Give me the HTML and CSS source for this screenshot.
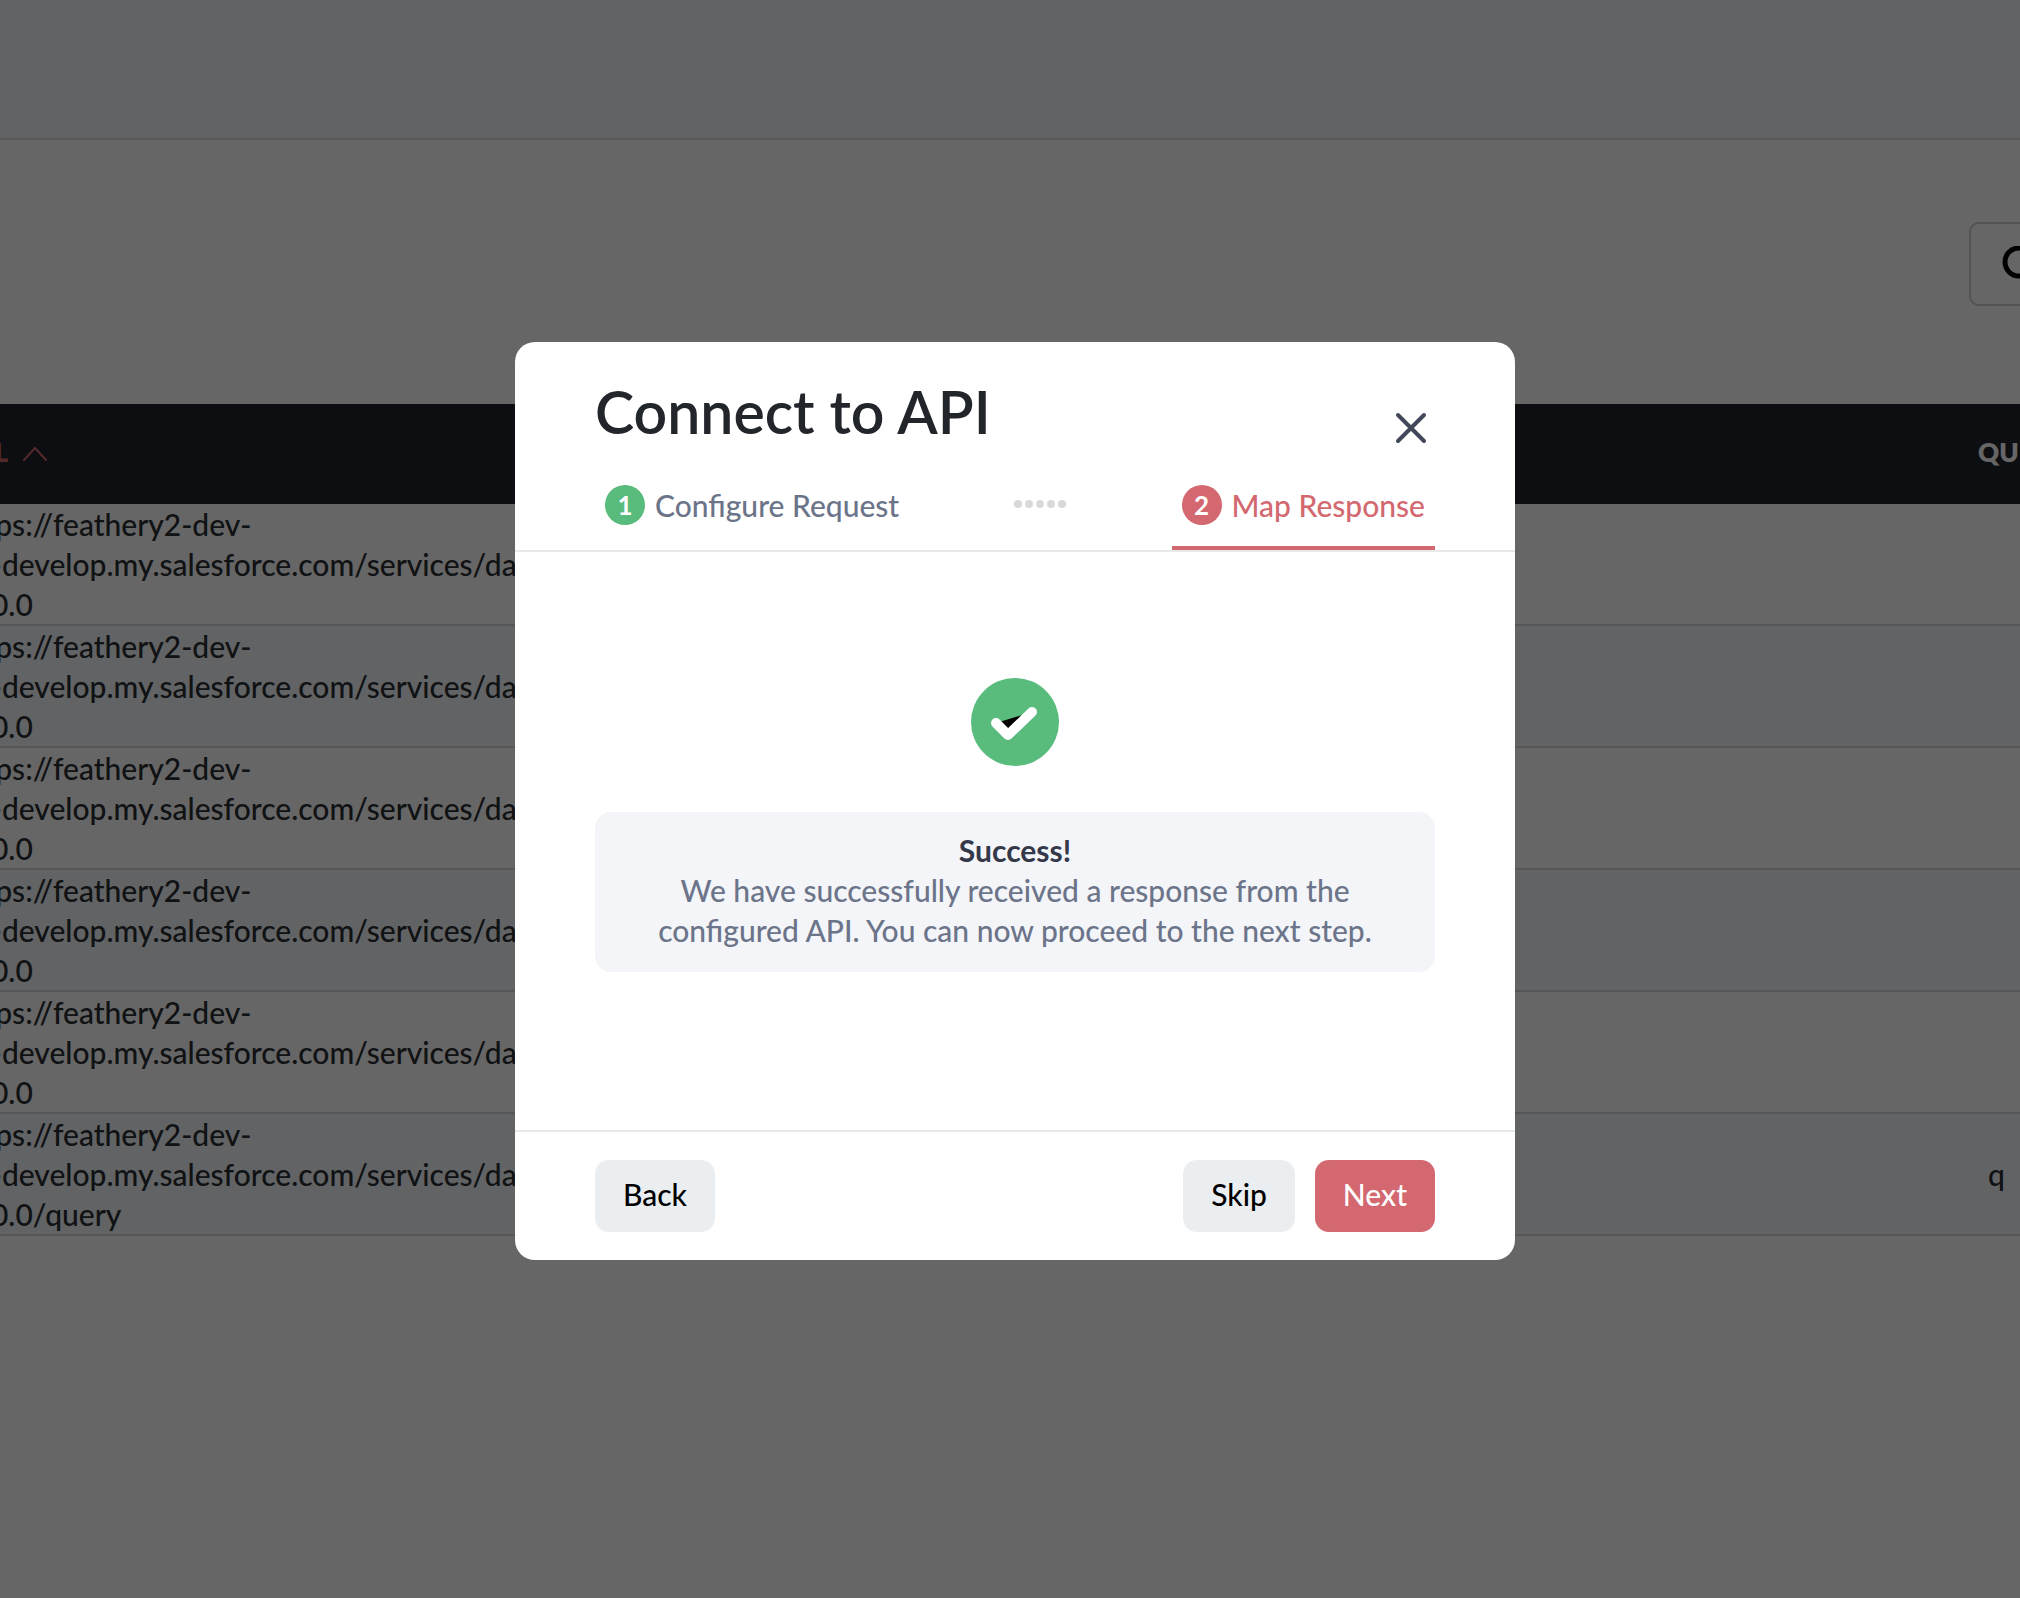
FILE: index.html
```html
<!DOCTYPE html>
<html lang="en">
<head>
    <meta charset="UTF-8">
    <meta name="viewport" content="width=device-width, initial-scale=1.0">
    <title>Connect to API</title>
    <link rel="stylesheet" href="styles.css">
</head>
<body>
    <div class="page">
        <header class="topbar"></header>
        <div class="toolbar">
            <button class="search" type="button" aria-label="Search">
                <svg width="40" height="40" viewBox="0 0 40 40" fill="none" stroke="#000" stroke-width="5" stroke-linecap="round">
                    <circle cx="18" cy="16" r="14"/>
                    <path d="M28 26l10 10"/>
                </svg>
            </button>
        </div>
        <table class="requests">
            <thead>
                <tr>
                    <th class="sorted">URL
                        <svg width="24" height="16" viewBox="0 0 24 16" fill="none" stroke="currentColor" stroke-width="2" stroke-linecap="round" stroke-linejoin="round">
                            <path d="M1 14L12 2l11 12"/>
                        </svg>
                    </th>
                    <th class="query">QUERY</th>
                </tr>
            </thead>
            <tbody>
                <tr><td>https://feathery2-dev-<br>ed-develop.my.salesforce.com/services/data/<br>v50.0</td><td></td></tr>
                <tr><td>https://feathery2-dev-<br>ed-develop.my.salesforce.com/services/data/<br>v50.0</td><td></td></tr>
                <tr><td>https://feathery2-dev-<br>ed-develop.my.salesforce.com/services/data/<br>v50.0</td><td></td></tr>
                <tr><td>https://feathery2-dev-<br>ed-develop.my.salesforce.com/services/data/<br>v50.0</td><td></td></tr>
                <tr><td>https://feathery2-dev-<br>ed-develop.my.salesforce.com/services/data/<br>v50.0</td><td></td></tr>
                <tr><td>https://feathery2-dev-<br>ed-develop.my.salesforce.com/services/data/<br>v50.0/query</td><td class="param">q</td></tr>
            </tbody>
        </table>
    </div>

    <div class="overlay">
        <div class="modal" role="dialog" aria-labelledby="modal-title">
            <div class="modal-header">
                <div class="title-row">
                    <h1 id="modal-title">Connect to API</h1>
                    <button class="close" type="button" aria-label="Close">
                        <svg width="32" height="32" viewBox="0 0 32 32" fill="none" stroke="#414859" stroke-width="4" stroke-linecap="round">
                            <path d="M3 3l26 26M29 3L3 29"/>
                        </svg>
                    </button>
                </div>
                <div class="steps">
                    <a class="step done" href="#configure"><span class="num">1</span>Configure Request</a>
                    <div class="dots"><i></i><i></i><i></i><i></i><i></i></div>
                    <a class="step active" href="#map"><span class="num">2</span>Map Response</a>
                </div>
            </div>
            <div class="modal-body">
                <svg class="check" width="88" height="88" viewBox="0 0 88 88">
                    <circle cx="44" cy="44" r="44" fill="#59bc7d"/>
                    <path d="M25 45l12 12 24-23" fill="#000" stroke="#fff" stroke-width="10" stroke-linecap="round" stroke-linejoin="round"/>
                </svg>
                <div class="message">
                    <strong>Success!</strong>
                    <p>We have successfully received a response from the configured API. You can now proceed to the next step.</p>
                </div>
            </div>
            <div class="modal-footer">
                <button class="btn" type="button">Back</button>
                <div class="actions">
                    <button class="btn" type="button">Skip</button>
                    <button class="btn primary" type="button">Next</button>
                </div>
            </div>
        </div>
    </div>
</body>
</html>
```
FILE: styles.css
```css
* {
    box-sizing: border-box;
}
body {
    margin: 0;
    font-family: Lato, sans-serif;
    font-size: 30px;
    font-weight: 500;
    line-height: 40px;
    color: #2a2d32;
    background: white;
}
button {
    font: inherit;
    border: none;
    cursor: pointer;
}
.page {
    height: 100vh;
    overflow: hidden;
}
.topbar {
    height: 140px;
    background: #f4f7fa;
    border-bottom: 2px solid #d9dbde;
}
.toolbar {
    display: flex;
    justify-content: flex-end;
    padding: 82px 0 98px;
    margin-right: -50px;
}
.search {
    width: 101px;
    height: 84px;
    padding: 22px 30px;
    background: white;
    border: 2px solid #d0d0d0;
    border-radius: 10px;
}
.requests {
    width: calc(100% + 142px);
    margin-left: -42px;
    border-collapse: separate;
    border-spacing: 0;
    table-layout: fixed;
}
.requests th {
    height: 100px;
    padding: 0 0 4px;
    background: #20232c;
    color: white;
    font-size: 26px;
    font-weight: 800;
    text-align: left;
}
.requests .sorted {
    color: #d36870;
}
.sorted svg {
    margin-left: 10px;
}
.query {
    width: 142px;
}
.requests td {
    height: 122px;
    padding: 0;
    border-bottom: 2px solid #d4d6d8;
}
.requests tr:nth-child(even) td {
    background: #f4f7fa;
}
.requests .param {
    padding-left: 10px;
}
.overlay {
    position: fixed;
    inset: 0;
    display: flex;
    justify-content: center;
    align-items: center;
    padding: 4px 0 0 10px;
    background: rgba(0, 0, 0, 0.6);
}
.modal {
    width: 1000px;
    max-width: 100%;
    background: white;
    border-radius: 20px;
}
.modal-header {
    padding: 36px 80px 0;
    border-bottom: 2px solid #e8e9e9;
}
.title-row {
    display: flex;
    justify-content: space-between;
    align-items: flex-start;
}
h1 {
    margin: 0;
    font-size: 59px;
    font-weight: 600;
    line-height: 68px;
    color: #22262b;
}
.close {
    display: flex;
    margin-top: 26px;
    padding: 8px;
    background: none;
}
.steps {
    display: flex;
    justify-content: space-between;
    align-items: stretch;
    margin-top: 26px;
}
.step {
    display: flex;
    align-items: center;
    gap: 10px;
    padding: 7px 10px 21px;
    border-bottom: 4px solid transparent;
    color: #6c7489;
    text-decoration: none;
}
.step.active {
    color: #d36870;
    border-bottom-color: #d36870;
}
.num {
    width: 40px;
    height: 40px;
    border-radius: 50%;
    background: #d36870;
    color: white;
    font-size: 26px;
    font-weight: 700;
    text-align: center;
}
.done .num {
    background: #59bc7d;
}
.dots {
    display: flex;
    gap: 3px;
    padding-top: 22px;
}
.dots i {
    width: 8px;
    height: 8px;
    border-radius: 50%;
    background: #d9d9d9;
}
.modal-body {
    display: flex;
    flex-direction: column;
    align-items: center;
    gap: 46px;
    padding: 126px 80px 158px;
}
.message {
    width: 100%;
    padding: 18px 50px 22px;
    background: #f3f5f9;
    border-radius: 16px;
    text-align: center;
    color: #6c7489;
}
.message strong {
    color: #343849;
}
.message p {
    margin: 0;
}
.modal-footer {
    display: flex;
    justify-content: space-between;
    padding: 28px 80px;
    border-top: 2px solid #e8e9e9;
}
.actions {
    display: flex;
    gap: 20px;
}
.btn {
    padding: 14px 28px 18px;
    border-radius: 14px;
    background: #ebeef1;
    color: black;
}
.btn.primary {
    background: #d36870;
    color: white;
}
```
